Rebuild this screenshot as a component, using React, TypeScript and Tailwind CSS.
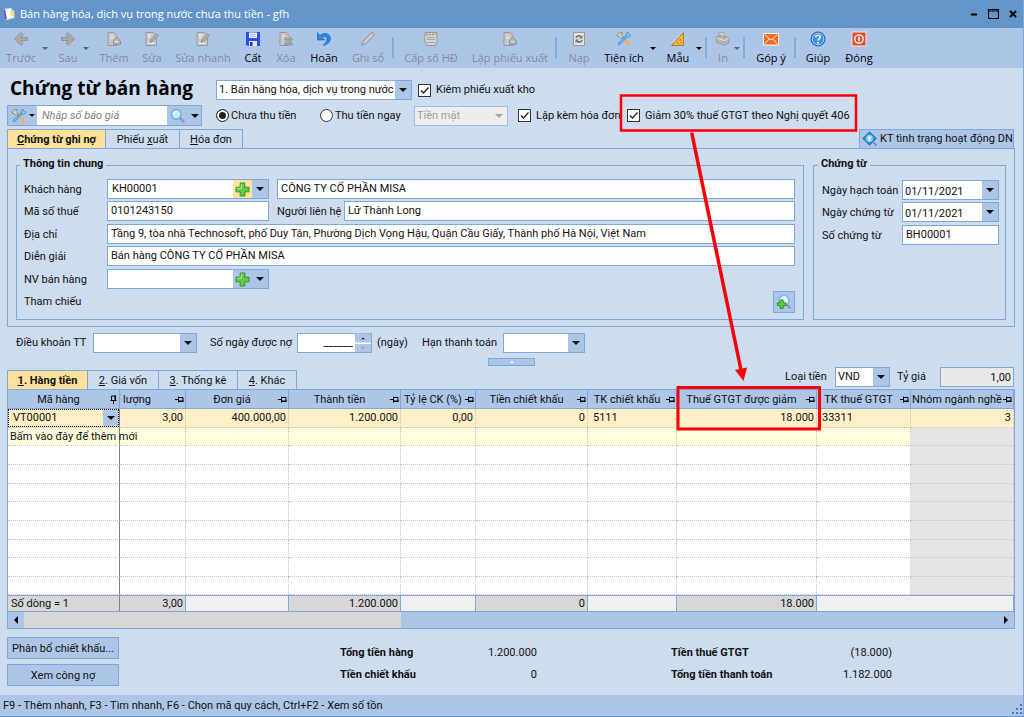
import React from 'react';
import clsx from 'clsx';

interface IconProps {
  name: string;
}

const Icon: React.FC<IconProps> = ({ name }) => {
  switch (name) {
    case 'back':
    case 'forward':
      return (
        <svg width="16" height="16" viewBox="0 0 16 16" className={clsx(name === 'forward' && '-scale-x-100')}>
          <path d="M8 1.5 L1.5 8 L8 14.5 L10.3 12.2 L7.8 9.5 H14.5 V6.5 H7.8 L10.3 3.8 Z" fill="#a9a9a9" stroke="#8b8b8b" strokeWidth="0.8" />
        </svg>
      );
    case 'add':
      return (
        <svg width="16" height="16" viewBox="0 0 16 16">
          <path d="M2 1.5 H8 L11 4.5 V14.5 H2 Z" fill="#c6c6c6" stroke="#9a9a9a" />
          <path d="M4 5 H7 M4 7 H8" stroke="#eeeeee" />
          <path d="M7.5 13.5 V9 L10.5 6.5 L14.5 10 V13.5 Z" fill="#b5b5b5" stroke="#909090" />
          <path d="M9 10.5 H12" stroke="#eeeeee" />
        </svg>
      );
    case 'edit':
      return (
        <svg width="16" height="16" viewBox="0 0 16 16">
          <path d="M2 1.5 H9.5 L12.5 4.5 V14.5 H2 Z" fill="#c9c9c9" stroke="#9a9a9a" />
          <path d="M4 4 H7 M4 6 H6 M4 12 H10" stroke="#ffffff" />
          <path d="M6 11.5 L7 8.5 L12.5 2.5 L14.5 4.5 L9 10.5 Z" fill="#adadad" stroke="#8a8a8a" strokeWidth="0.8" />
        </svg>
      );
    case 'save':
      return (
        <svg width="16" height="16" viewBox="0 0 16 16">
          <path d="M1 1 H15 V15 H2.5 L1 13.5 Z" fill="#2d4df0" />
          <rect x="4" y="1.5" width="8" height="5.5" fill="#f4f6ff" />
          <path d="M5 3.3 H11 M5 5.3 H11" stroke="#8fa2ee" strokeWidth="0.8" />
          <rect x="4" y="10" width="8" height="5" fill="#dfe5fb" />
          <rect x="5" y="11" width="2.5" height="4" fill="#2038c0" />
        </svg>
      );
    case 'delete':
      return (
        <svg width="16" height="16" viewBox="0 0 16 16">
          <path d="M2 1.5 H8 L11 4.5 V14.5 H2 Z" fill="#c6c6c6" stroke="#9a9a9a" />
          <path d="M4 5 H7 M4 7.5 H6" stroke="#eeeeee" />
          <path d="M7 7 L14 14 M14 7 L7 14" stroke="#8d8d8d" strokeWidth="3" />
          <path d="M7.5 7.5 L13.5 13.5 M13.5 7.5 L7.5 13.5" stroke="#c2c2c2" strokeWidth="1" />
        </svg>
      );
    case 'undo':
      return (
        <svg width="16" height="16" viewBox="0 0 16 16">
          <path d="M1.5 1.5 V9 H9 L6.2 6.6 C8.5 4.7 11 6 10.8 8.6 C10.6 11 9 12.5 7 14.5 C11.5 13.7 14.5 11 14.5 7.5 C14.5 2.8 8.5 0.5 4 4.4 Z" fill="#2d86dd" stroke="#1565b8" strokeWidth="0.6" />
        </svg>
      );
    case 'pencil':
      return (
        <svg width="16" height="16" viewBox="0 0 16 16">
          <path d="M1.5 14.5 L2.5 10.5 L12 1 L14.8 3.8 L5.5 13 Z" fill="#bdbdbd" stroke="#8d8d8d" strokeWidth="0.8" />
          <path d="M4.5 11.5 L12.5 3.5" stroke="#e6e6e6" />
        </svg>
      );
    case 'invoice':
      return (
        <svg width="16" height="16" viewBox="0 0 16 16">
          <path d="M2 1.5 H14 V11 L12.5 14.5 H3.5 L2 11 Z" fill="#d6d6d6" stroke="#979797" />
          <path d="M3 3.5 H13" stroke="#8f8f8f" strokeWidth="1.6" strokeDasharray="2 1" />
          <path d="M4 6.5 H12 M4 8.5 H12 M4 11.5 H12" stroke="#a2a2a2" />
        </svg>
      );
    case 'reload':
      return (
        <svg width="16" height="16" viewBox="0 0 16 16">
          <rect x="2.5" y="1.5" width="11" height="13" fill="#e2e2e2" stroke="#9b9b9b" />
          <path d="M5 7 C5.5 4.5 9 4.2 10 6 M11 9 C10.5 11.5 7 11.8 6 10" fill="none" stroke="#777777" strokeWidth="1.6" />
          <path d="M11.5 4 V7.5 H8 Z M4.5 12 V8.5 H8 Z" fill="#777777" />
        </svg>
      );
    case 'tools':
      return (
        <svg width="16" height="16" viewBox="0 0 16 16">
          <path d="M10.5 5.5 L3 13" stroke="#4a98d9" strokeWidth="2.6" strokeLinecap="round" />
          <path d="M10.5 5.5 L3 13" stroke="#b6dcf7" strokeWidth="0.8" strokeLinecap="round" />
          <path d="M10 2.5 L12 1 L12.5 3.5 L15 4 L13.5 6.2 L10.5 6 Z" fill="#8ecbf3" stroke="#4183bb" strokeWidth="0.7" />
          <path d="M6 6 L10 10" stroke="#8b8b8b" strokeWidth="1.4" />
          <path d="M1 5 C1 2.5 3.5 1 6.5 1.8 L5 3.5 L7 5.5 L5 7.5 L3 5.5 Z" fill="#dcd6c6" stroke="#6d6a60" strokeWidth="0.7" />
          <path d="M9.8 9.8 L13 13.3" stroke="#eeb15c" strokeWidth="3" strokeLinecap="round" />
        </svg>
      );
    case 'ruler':
      return (
        <svg width="16" height="16" viewBox="0 0 16 16">
          <path d="M13.5 1.5 V14.5 H1.5 Z" fill="#f3b63c" stroke="#bd7a16" />
          <path d="M10.8 8 V12 H7 Z" fill="#f9e2ae" stroke="#bd7a16" strokeWidth="0.7" />
          <path d="M3 11 L6 8 M7 7 L10 4" stroke="#fbe3ae" strokeWidth="1" />
        </svg>
      );
    case 'print':
      return (
        <svg width="16" height="16" viewBox="0 0 16 16">
          <path d="M4 1.5 H9 L10.5 7 H3 Z" fill="#d0d0d0" stroke="#9b9b9b" strokeWidth="0.8" />
          <path d="M1 6 L5 4.5 L14 6.5 V11.5 L9.5 14.5 L1.5 11 Z" fill="#b4b4b4" stroke="#929292" strokeWidth="0.8" />
          <path d="M1.5 7 L9.5 9.5 L14 6.8" fill="none" stroke="#e3e3e3" />
        </svg>
      );
    case 'mail':
      return (
        <svg width="16" height="16" viewBox="0 0 16 16">
          <rect x="0.5" y="2.5" width="15" height="11.5" fill="#ef6a23" stroke="#fdf1e6" />
          <path d="M2 4 L8 9 L14 4 M2 12.5 L6.2 7.8 M14 12.5 L9.8 7.8" fill="none" stroke="#fff4e8" strokeWidth="1" />
        </svg>
      );
    case 'help':
      return (
        <svg width="16" height="16" viewBox="0 0 16 16">
          <circle cx="8" cy="8" r="7" fill="#3d90e2" stroke="#1e5ca8" />
          <circle cx="8" cy="8" r="5.8" fill="none" stroke="#a9d3f8" strokeWidth="0.9" />
          <path d="M5.8 6.3 C5.8 3.4 10.4 3.6 10.2 6.2 C10 7.6 8 7.6 8 9.5" fill="none" stroke="#ffffff" strokeWidth="1.5" />
          <circle cx="8" cy="11.7" r="1" fill="#ffffff" />
        </svg>
      );
    case 'power':
      return (
        <svg width="16" height="16" viewBox="0 0 16 16">
          <rect x="1" y="1" width="14" height="14" fill="#e2512a" stroke="#f6e4dc" />
          <circle cx="8" cy="8" r="4.2" fill="none" stroke="#ffffff" strokeWidth="1.3" />
          <path d="M8 5.5 V10.5" stroke="#ffffff" strokeWidth="1.5" />
        </svg>
      );
    case 'search':
      return (
        <svg width="16" height="16" viewBox="0 0 16 16">
          <path d="M9.8 9.8 L13.5 13.5" stroke="#9b92d8" strokeWidth="2.6" strokeLinecap="round" />
          <circle cx="6.3" cy="6.3" r="4.8" fill="#c4ecfb" stroke="#5fa9df" strokeWidth="1.3" />
          <path d="M3.5 6 C3.8 4.4 5 3.5 6.5 3.5" fill="none" stroke="#ffffff" strokeWidth="1.2" />
        </svg>
      );
    case 'searchAdd':
      return (
        <svg width="16" height="16" viewBox="0 0 16 16">
          <path d="M11 11 L14 14" stroke="#8f86cf" strokeWidth="2" strokeLinecap="round" />
          <circle cx="8" cy="6.5" r="5" fill="#dff3fd" stroke="#6fb0e0" strokeWidth="1.2" />
          <path d="M4.2 6 H7.2 V8.8 H10 V11.6 H7.2 V14.5 H4.2 V11.6 H1.4 V8.8 H4.2 Z" fill="#63cf45" stroke="#25891a" strokeWidth="0.9" />
        </svg>
      );
    case 'plus':
      return (
        <svg width="15" height="15" viewBox="0 0 15 15">
          <path d="M5.2 1 H9.8 V5.2 H14 V9.8 H9.8 V14 H5.2 V9.8 H1 V5.2 H5.2 Z" fill="#67cc45" stroke="#2f9427" />
          <path d="M6.3 2.3 V6.3 H2.3" fill="none" stroke="#b5ee9d" />
        </svg>
      );
    case 'info':
      return (
        <svg width="16" height="16" viewBox="0 0 16 16" className="shrink-0">
          <path d="M7.5 0.8 L14.5 7.5 L7.5 14.2 L0.8 7.5 Z" fill="#2a93d4" stroke="#1b76b3" />
          <circle cx="7.5" cy="7.5" r="3.4" fill="#8bd0f5" />
          <path d="M7.5 5 V10 M6 6.7 H9" stroke="#ffffff" strokeWidth="1.4" />
          <path d="M11 11 L14.5 14.5" stroke="#8f86cf" strokeWidth="2" />
        </svg>
      );
    default:
      return (
        <svg width="13" height="14" viewBox="0 0 13 14">
          <path d="M1 2.5 L9 1 L12.5 10.5 L4 13 Z" fill="#ffffff" stroke="#c5d5ea" strokeWidth="0.6" />
          <path d="M1 2.5 L3 2.2 L5 12.5 L3 12 Z" fill="#5a54c8" />
          <path d="M8 4 L12 3 L12.6 8.5 L9 9.5 Z" fill="#f6dc84" />
        </svg>
      );
  }
};

const Caret = ({ small = false }: { small?: boolean }) => (
  <svg width={small ? 6 : 8} height={small ? 3 : 4} viewBox="0 0 8 4">
    <path d="M0 0 H8 L4 4 Z" fill="currentColor" />
  </svg>
);

const Pin = ({ up = false }: { up?: boolean }) => (
  <svg width="9" height="9" viewBox="0 0 9 9" className={clsx('shrink-0', up && '-rotate-90')}>
    <path d="M0 4.5 H3 M3.5 1.5 V7.5 M3.5 2.5 H8 V6 M3.5 6 H8.5" fill="none" stroke="#000000" />
    <path d="M3 6.5 H8.5" stroke="#000000" />
  </svg>
);

const toolbar = [
  { icon: 'back', label: 'Trước', box: 'w-[42px]', off: true },
  { caret: true, box: 'w-[6px]', off: true },
  { icon: 'forward', label: 'Sau', box: 'ml-[5px] w-[30px]', off: true },
  { caret: true, box: 'w-[6px]', off: true },
  { icon: 'add', label: 'Thêm', box: 'ml-[10px] w-[30px]', off: true },
  { icon: 'edit', label: 'Sửa', box: 'w-[46px]', off: true },
  { icon: 'edit', label: 'Sửa nhanh', box: 'w-[56px]', off: true },
  { icon: 'save', label: 'Cất', box: 'w-[44px]' },
  { icon: 'delete', label: 'Xóa', box: 'w-[22px]', off: true },
  { icon: 'undo', label: 'Hoãn', box: 'w-[54px]' },
  { icon: 'pencil', label: 'Ghi sổ', box: 'w-[34px]', off: true },
  { box: 'ml-[7px]' },
  { icon: 'invoice', label: 'Cấp số HĐ', box: 'w-[74px]', off: true },
  { icon: 'add', label: 'Lập phiếu xuất', box: 'w-[84px]', off: true },
  { box: 'ml-[3px]' },
  { icon: 'reload', label: 'Nạp', box: 'w-[44px]', off: true },
  { icon: 'tools', label: 'Tiện ích', box: 'w-[46px]' },
  { caret: true, box: 'ml-[3px] w-[6px]' },
  { icon: 'ruler', label: 'Mẫu', box: 'ml-[8px] w-[28px]' },
  { caret: true, box: 'ml-[4px] w-[6px]' },
  { box: 'ml-[3px]' },
  { icon: 'print', label: 'In', box: 'ml-[5px] w-[22px]', off: true },
  { caret: true, box: 'w-[6px]', off: true },
  { box: 'ml-[3px]' },
  { icon: 'mail', label: 'Góp ý', box: 'ml-[6px] w-[40px]' },
  { box: 'ml-[3px]' },
  { icon: 'help', label: 'Giúp', box: 'w-[44px]' },
  { icon: 'power', label: 'Đóng', box: 'w-[38px]' },
];

const Toolbar = () => (
  <div className="flex h-[40px] shrink-0 bg-[#adc6e8] font-['Open_Sans','Noto_Sans',sans-serif] text-[11px] leading-[14px]">
    {toolbar.map((item, i) => {
      const color = item.off ? 'text-[#7f8a99]' : 'text-black';
      if (item.icon) {
        return (
          <button key={i} disabled={item.off} className={clsx('flex shrink-0 flex-col items-center gap-[4px] pt-[3px] whitespace-nowrap', item.box, color)}>
            <Icon name={item.icon} />
            {item.label}
          </button>
        );
      }
      if (item.caret) {
        return (
          <button key={i} disabled={item.off} aria-label="Mở menu" className={clsx('flex shrink-0 items-center justify-center', item.box, item.off ? 'text-[#55657b]' : 'text-black')}>
            <Caret small />
          </button>
        );
      }
      return <div key={i} className={clsx('mt-[9px] h-[21px] w-[2px] shrink-0 bg-[#82abdc]', item.box)} />;
    })}
  </div>
);

interface ComboProps {
  label: string;
  value?: string;
  className?: string;
  disabled?: boolean;
}

const Combo: React.FC<ComboProps> = ({ label, value = '', className, disabled }) => (
  <div className={clsx('relative h-[20px] shrink-0 border', disabled ? 'border-[#9dbde3] bg-[#ededed] text-[#a0a0a0]' : 'border-[#7fa8da] bg-white', className)}>
    <select aria-label={label} disabled={disabled} className="block h-full w-full appearance-none pl-[2px] pr-[16px] opacity-100 outline-none">
      <option>{value}</option>
    </select>
    <span className={clsx('pointer-events-none absolute inset-y-0 right-0 flex w-[16px] items-center justify-center', !disabled && 'bg-[#adc6e8]')}>
      <Caret />
    </span>
  </div>
);

const PlusCombo = ({ id, value = '', active = false }: { id: string; value?: string; active?: boolean }) => (
  <div className="flex h-[20px] w-[162px] shrink-0 border border-[#7fa8da] bg-white">
    <input id={id} defaultValue={value} className="min-w-0 flex-1 pl-[4px] outline-none" />
    <button aria-label="Thêm mới" className={clsx('flex w-[19px] items-center justify-center', active ? 'bg-[#fde49a]' : 'bg-[#adc6e8]')}>
      <Icon name="plus" />
    </button>
    <button aria-label="Chọn" className="flex w-[16px] items-center justify-center bg-[#adc6e8]">
      <Caret />
    </button>
  </div>
);

const TextBox = ({ id, value, className }: { id: string; value: string; className?: string }) => (
  <input id={id} defaultValue={value} className={clsx('h-[20px] min-w-0 border border-[#7fa8da] bg-white pl-[3px] outline-none', className)} />
);

const Check = ({ label, className }: { label: string; className?: string }) => (
  <label className={clsx('flex shrink-0 items-center gap-[5px] whitespace-nowrap', className)}>
    <span className="grid">
      <input type="checkbox" defaultChecked className="h-[13px] w-[13px] appearance-none border border-[#333333] bg-white [grid-area:1/1]" />
      <svg width="13" height="13" viewBox="0 0 13 13" className="pointer-events-none [grid-area:1/1]">
        <path d="M3 6.5 L5.5 9 L10.5 3.5" fill="none" stroke="#222222" strokeWidth="1.3" />
      </svg>
    </span>
    {label}
  </label>
);

const Radio = ({ label, checked = false, className }: { label: string; checked?: boolean; className?: string }) => (
  <label className={clsx('flex shrink-0 items-center gap-[2px] whitespace-nowrap', className)}>
    <input
      type="radio"
      name="payment"
      defaultChecked={checked}
      className="h-[13px] w-[13px] appearance-none rounded-full border border-[#333333] bg-white checked:border-[#333333] checked:bg-[#222222] checked:shadow-[inset_0_0_0_2px_white]"
    />
    {label}
  </label>
);

const columns = [
  { title: 'Mã hàng', width: 'w-[112px]', value: 'VT00001' },
  { title: 'Số lượng', width: 'w-[66px]', value: '3,00' },
  { title: 'Đơn giá', width: 'w-[103px]', value: '400.000,00' },
  { title: 'Thành tiền', width: 'w-[112px]', value: '1.200.000' },
  { title: 'Tỷ lệ CK (%)', width: 'w-[75px]', value: '0,00' },
  { title: 'Tiền chiết khấu', width: 'w-[112px]', value: '0' },
  { title: 'TK chiết khấu', width: 'w-[89px]', value: '5111', left: true },
  { title: 'Thuế GTGT được giảm', width: 'w-[140px]', value: '18.000' },
  { title: 'TK thuế GTGT', width: 'w-[94px]', value: '33311', left: true },
  { title: 'Nhóm ngành nghề', width: '', value: '3' },
];

const totals = ['Số dòng = 1', '3,00', '', '1.200.000', '', '0', '', '18.000'];

const colBorder = (c: number) =>
  c === 0 ? 'border-r border-r-[#808080]' : 'border-r border-r-[#c4c4c4] [border-right-style:dotted]';

const Grid = () => (
  <table className="w-full table-fixed border-separate border-spacing-0">
    <colgroup>
      {columns.map(col => (
        <col key={col.title} className={col.width} />
      ))}
    </colgroup>
    <thead>
      <tr className="h-[19px] bg-[#adc6e8]">
        {columns.map((col, c) => (
          <th key={col.title} className="overflow-hidden border-r border-b border-[#7fa8da] p-0 font-normal">
            <div className="flex items-center pt-px pr-px">
              {c === 1 ? (
                // the frozen first column hides the start of this title
                <span className="flex w-[31px] justify-end overflow-hidden whitespace-nowrap">{col.title}</span>
              ) : (
                <span className="min-w-0 flex-1 whitespace-nowrap">{col.title}</span>
              )}
              {c === 1 && <span className="flex-1" />}
              <Pin up={c === 0} />
            </div>
          </th>
        ))}
      </tr>
    </thead>
    <tbody>
      <tr className="h-[19px] bg-[#fff0c8]">
        {columns.map((col, c) => (
          <td key={col.title} className={clsx('border-b border-b-[#c4c4c4] p-0 [border-bottom-style:dotted]', colBorder(c), col.left ? 'pl-[5px]' : 'pr-[2px] text-right')}>
            {c === 0 ? (
              <div className="relative -mr-[2px] h-[18px] border border-dotted border-black">
                <select aria-label="Mã hàng" className="block h-full w-full appearance-none pl-[4px] outline-none">
                  <option>{col.value}</option>
                </select>
                <span className="pointer-events-none absolute inset-y-0 right-0 flex w-[15px] items-center justify-center bg-[#adc6e8]">
                  <Caret />
                </span>
              </div>
            ) : (
              col.value
            )}
          </td>
        ))}
      </tr>
      {Array.from({ length: 9 }, (_, r) => (
        <tr key={r} className={clsx(r % 3 === 0 || r === 8 ? 'h-[18px]' : 'h-[19px]', r === 0 ? 'bg-[#ffffdf]' : 'bg-white')}>
          {columns.map((col, c) => (
            <td key={col.title} className={clsx('border-b border-b-[#c4c4c4] p-0 [border-bottom-style:dotted]', colBorder(c), c === 9 && 'bg-[#e4e4e4]')}>
              {r === 0 && c === 0 && <div className="w-0 pl-[2px] whitespace-nowrap">Bấm vào đây để thêm mới</div>}
            </td>
          ))}
        </tr>
      ))}
    </tbody>
    <tfoot>
      <tr className="h-[17px]">
        {totals.map((total, c) => (
          <td
            key={c}
            className={clsx(
              'border-y border-r border-[#7fa8da] p-0',
              c === 0 ? 'border-r-[#808080] pl-[3px]' : 'pr-[2px] text-right',
              total ? 'bg-[#d7d7d7]' : 'bg-[#f0f0f0]'
            )}
          >
            {total}
          </td>
        ))}
        <td colSpan={2} className="border-y border-r border-[#7fa8da] bg-[#f0f0f0] p-0" />
      </tr>
    </tfoot>
  </table>
);

const Tab = ({ keyChar, before = '', after, active = false, className }: { keyChar: string; before?: string; after: string; active?: boolean; className: string }) => (
  <button
    className={clsx(
      'h-[19px] border-t border-r border-[#7fa8da] pt-px text-center whitespace-nowrap first:border-l',
      active ? 'bg-[#fee29a] font-bold' : 'bg-[#cddcef]',
      className
    )}
  >
    {before}
    <u>{keyChar}</u>
    {after}
  </button>
);

const legend = '-ml-[4px] px-[3px] pb-[2px] font-bold leading-[14px]';
const actionButton = 'h-[22px] w-[112px] border border-[#7fa8da] bg-[#adc6e8] pt-px';
const fieldRows = 'grid-rows-[22px_23px_22px_23px_22px_22px] leading-[22px]';

const App: React.FC = () => (
  <div className="relative flex min-h-screen min-w-[1024px] flex-col overflow-hidden border-r border-[#7fa8da] bg-[#cddcef] font-[Roboto,'Liberation_Sans',sans-serif] text-[11px] leading-[14px] text-[#111111]">
    <header className="flex h-[28px] shrink-0 items-center bg-[#6395c9] pr-[6px] pl-[2px]">
      <Icon name="app" />
      <h1 className="flex-1 pl-[5px] font-['Open_Sans','Noto_Sans',sans-serif] text-[11px] text-white">
        Bán hàng hóa, dịch vụ trong nước chưa thu tiền - gfh
      </h1>
      <div className="flex items-center gap-[10px] text-black">
        <button aria-label="Thu nhỏ">
          <svg width="8" height="10" viewBox="0 0 8 10"><path d="M1 5.5 H7" stroke="currentColor" strokeWidth="2" /></svg>
        </button>
        <button aria-label="Phóng to">
          <svg width="11" height="10" viewBox="0 0 11 10"><path d="M0.5 0.5 H10.5 V9.5 H0.5 Z M0 2 H11" fill="none" stroke="currentColor" strokeWidth="1.2" /></svg>
        </button>
        <button aria-label="Đóng cửa sổ">
          <svg width="8" height="10" viewBox="0 0 8 10"><path d="M1 2 L7 8 M7 2 L1 8" stroke="currentColor" strokeWidth="2" /></svg>
        </button>
      </div>
    </header>

    <Toolbar />

    <div className="flex gap-[14px] pt-[7px] pl-[7px]">
      <div className="w-[195px] shrink-0">
        <h2 className="h-[30px] pl-[3px] font-['Open_Sans','Noto_Sans',sans-serif] text-[19px] leading-[26px] font-bold whitespace-nowrap text-black">Chứng từ bán hàng</h2>
        <div className="flex h-[21px] border border-[#7fa8da] bg-[#adc6e8]">
          <button aria-label="Tiện ích" className="flex w-[29px] items-center justify-center gap-[2px]">
            <Icon name="tools" />
            <Caret small />
          </button>
          <input aria-label="Số báo giá" placeholder="Nhập số báo giá" className="w-[130px] min-w-0 bg-white pl-[5px] italic outline-none placeholder:text-[#7d7d7d]" />
          <button aria-label="Tìm" className="flex flex-1 items-center justify-center gap-[5px]">
            <Icon name="search" />
            <Caret />
          </button>
        </div>
      </div>
      <div>
        <div className="flex h-[30px] items-center">
          <Combo label="Loại chứng từ" value="1. Bán hàng hóa, dịch vụ trong nước" className="w-[196px]" />
          <Check label="Kiêm phiếu xuất kho" className="ml-[6px]" />
        </div>
        <div className="flex h-[21px] items-center">
          <Radio label="Chưa thu tiền" checked className="w-[104px]" />
          <Radio label="Thu tiền ngay" className="w-[94px]" />
          <Combo label="Phương thức thanh toán" value="Tiền mặt" disabled className="w-[94px]" />
          <Check label="Lập kèm hóa đơn" className="ml-[10px] w-[109px]" />
          <Check label="Giảm 30% thuế GTGT theo Nghị quyết 406" />
        </div>
      </div>
    </div>

    <div className="mt-[3px] flex items-end pr-[9px] pl-[7px]">
      <Tab keyChar="C" after="hứng từ ghi nợ" active className="w-[99px]" />
      <Tab before="Phiếu " keyChar="x" after="uất" className="w-[74px]" />
      <Tab keyChar="H" after="óa đơn" className="w-[63px]" />
      <button className="ml-auto flex h-[19px] w-[155px] items-center gap-[2px] border-x border-t border-[#7fa8da] bg-[#adc6e8] pl-[2px] whitespace-nowrap">
        <Icon name="info" />
        KT tình trạng hoạt động DN
      </button>
    </div>

    <section className="mr-[8px] ml-[7px] flex gap-[9px] border border-[#7fa8da] px-[8px] pt-[8px] pb-[6px]">
      <fieldset className="min-w-0 flex-1 border border-[#7fa8da] pr-[8px] pb-[6px] pl-[7px]">
        <legend className={legend}>Thông tin chung</legend>
        <div className={clsx('mt-[6px] grid grid-cols-[83px_1fr]', fieldRows)}>
          <label htmlFor="customer">Khách hàng</label>
          <div className="flex gap-[8px]">
            <PlusCombo id="customer" value="KH00001" active />
            <TextBox id="customerName" value="CÔNG TY CỔ PHẦN MISA" className="flex-1" />
          </div>
          <label htmlFor="taxCode">Mã số thuế</label>
          <div className="flex">
            <TextBox id="taxCode" value="0101243150" className="w-[162px]" />
            <label htmlFor="contact" className="w-[75px] shrink-0 pl-[8px] whitespace-nowrap">Người liên hệ</label>
            <TextBox id="contact" value="Lữ Thành Long" className="flex-1" />
          </div>
          <label htmlFor="address">Địa chỉ</label>
          <TextBox id="address" value="Tầng 9, tòa nhà Technosoft, phố Duy Tân, Phường Dịch Vọng Hậu, Quận Cầu Giấy, Thành phố Hà Nội, Việt Nam" />
          <label htmlFor="note">Diễn giải</label>
          <TextBox id="note" value="Bán hàng CÔNG TY CỔ PHẦN MISA" />
          <label htmlFor="seller">NV bán hàng</label>
          <PlusCombo id="seller" />
          <span>Tham chiếu</span>
          <button aria-label="Tìm chứng từ tham chiếu" className="flex h-[22px] w-[22px] items-center justify-center justify-self-end border border-[#7fa8da] bg-[#adc6e8]">
            <Icon name="searchAdd" />
          </button>
        </div>
      </fieldset>
      <fieldset className="w-[193px] shrink-0 border border-[#7fa8da] pr-[6px] pl-[8px]">
        <legend className={legend}>Chứng từ</legend>
        <div className={clsx('mt-[7px] grid grid-cols-[80px_1fr]', fieldRows)}>
          <span>Ngày hạch toán</span>
          <Combo label="Ngày hạch toán" value="01/11/2021" />
          <span>Ngày chứng từ</span>
          <Combo label="Ngày chứng từ" value="01/11/2021" />
          <label htmlFor="docNo">Số chứng từ</label>
          <TextBox id="docNo" value="BH00001" />
        </div>
      </fieldset>
    </section>

    <div className="flex items-center pt-[6px] pl-[16px] whitespace-nowrap">
      <span className="w-[77px]">Điều khoản TT</span>
      <Combo label="Điều khoản TT" className="w-[104px]" />
      <label htmlFor="days" className="ml-[13px] w-[87px]">Số ngày được nợ</label>
      <div className="flex h-[20px] w-[75px] border border-[#7fa8da] bg-white">
        <input id="days" defaultValue="______" className="min-w-0 flex-1 pr-[2px] text-right outline-none" />
        <div className="flex w-[16px] flex-col gap-px">
          <button aria-label="Tăng" className="flex flex-1 rotate-180 items-center justify-center bg-[#adc6e8]">
            <svg width="4" height="2" viewBox="0 0 4 2"><path d="M0 0 H4 L2 2 Z" /></svg>
          </button>
          <button aria-label="Giảm" className="flex flex-1 items-center justify-center bg-[#adc6e8] text-[#a58fae]">
            <svg width="4" height="2" viewBox="0 0 4 2"><path d="M0 0 H4 L2 2 Z" fill="currentColor" /></svg>
          </button>
        </div>
      </div>
      <span className="w-[50px] pl-[5px]">(ngày)</span>
      <span className="w-[81px]">Hạn thanh toán</span>
      <Combo label="Hạn thanh toán" className="w-[82px]" />
    </div>

    <button aria-label="Thu gọn" className="mt-[5px] flex h-[8px] w-[47px] items-center justify-center self-center border border-[#7fa8da] bg-[#adc6e8] text-white">
      <svg width="4" height="2" viewBox="0 0 4 2"><path d="M0 2 H4 L2 0 Z" fill="currentColor" /></svg>
    </button>

    <div className="flex items-end pr-[9px] pl-[7px]">
      <Tab keyChar="1" after=". Hàng tiền" active className="w-[81px]" />
      <Tab keyChar="2" after=". Giá vốn" className="w-[71px]" />
      <Tab keyChar="3" after=". Thống kê" className="w-[79px]" />
      <Tab keyChar="4" after=". Khác" className="w-[59px]" />
      <div className="ml-auto flex items-center pt-px pb-[2px] whitespace-nowrap">
        <span className="w-[50px]">Loại tiền</span>
        <Combo label="Loại tiền" value="VND" className="w-[55px]" />
        <label htmlFor="rate" className="w-[50px] pl-[7px]">Tỷ giá</label>
        <input id="rate" defaultValue="1,00" className="h-[20px] w-[74px] border border-[#7fa8da] bg-[#e9e9e9] pr-[2px] text-right outline-none" />
      </div>
    </div>

    <section className="mr-[8px] ml-[7px] border border-[#7fa8da]">
      <Grid />
      <div className="flex h-[16px] bg-[#adc6e8]">
        <button aria-label="Cuộn trái" className="flex w-[16px] items-center justify-center">
          <svg width="4" height="8" viewBox="0 0 4 8"><path d="M4 0 V8 L0 4 Z" /></svg>
        </button>
        <div className="w-[377px] bg-[#d7d7d7]" />
        <button aria-label="Cuộn phải" className="ml-auto flex w-[16px] items-center justify-center">
          <svg width="4" height="8" viewBox="0 0 4 8"><path d="M0 0 V8 L4 4 Z" /></svg>
        </button>
      </div>
    </section>

    <div className="flex flex-1 items-start pt-[8px] pb-[9px] pl-[7px]">
      <div className="flex flex-col gap-[5px]">
        <button className={actionButton}>Phân bổ chiết khấu...</button>
        <button className={actionButton}>Xem công nợ</button>
      </div>
      <dl className="ml-[221px] grid grid-cols-[97px_100px_134px_121px_100px] pt-[5px] leading-[22px]">
        <dt className="font-bold">Tổng tiền hàng</dt>
        <dd className="text-right">1.200.000</dd>
        <dt className="col-start-4 font-bold">Tiền thuế GTGT</dt>
        <dd className="text-right">(18.000)</dd>
        <dt className="font-bold">Tiền chiết khấu</dt>
        <dd className="text-right">0</dd>
        <dt className="col-start-4 font-bold">Tổng tiền thanh toán</dt>
        <dd className="text-right">1.182.000</dd>
      </dl>
    </div>

    <footer className="flex h-[22px] shrink-0 items-center border-b border-[#6395c9] bg-[#adc6e8] pl-[3px]">
      F9 - Thêm nhanh, F3 - Tìm nhanh, F6 - Chọn mã quy cách, Ctrl+F2 - Xem số tồn
      <svg width="11" height="11" viewBox="0 0 11 11" className="mt-[8px] ml-auto">
        <path d="M8 1 H10 M8 5 H10 M4 5 H6 M8 9 H10 M4 9 H6 M0 9 H2" stroke="#4d74a8" strokeWidth="2" />
      </svg>
    </footer>

    <svg width="1024" height="717" viewBox="0 0 1024 717" className="pointer-events-none absolute top-0 left-0">
      <g fill="none" stroke="#fb0007">
        <rect x="621" y="95.5" width="235" height="35" strokeWidth="2.5" />
        <rect x="678" y="387.5" width="141.5" height="41.5" strokeWidth="3" />
        <path d="M692 134 L741 370" strokeWidth="3.5" strokeLinecap="round" />
      </g>
      <path d="M735 370 L747 367.5 L743.5 381 Z" fill="#fb0007" />
    </svg>
  </div>
);

export default App;
